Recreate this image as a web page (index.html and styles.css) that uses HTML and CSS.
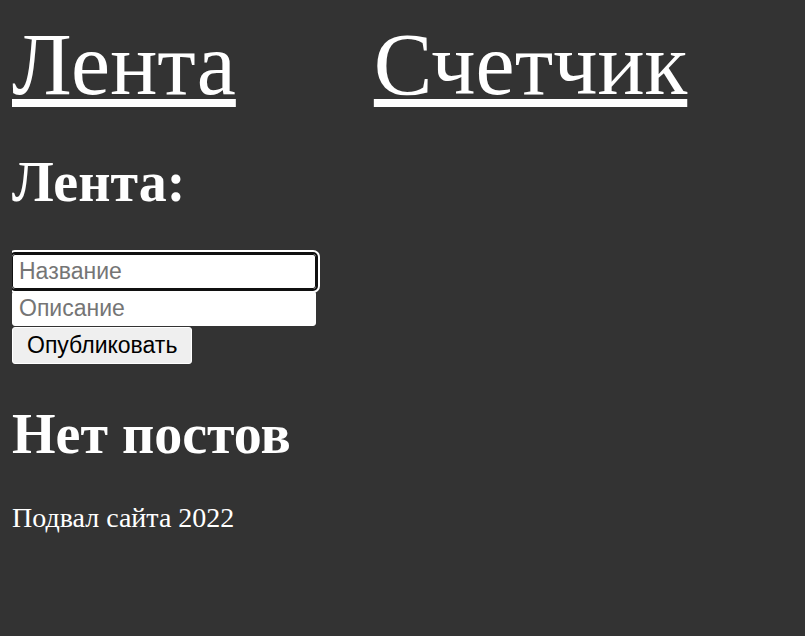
FILE: index.html
```html
<!DOCTYPE html>
<html lang="ru">
<head>
<meta charset="utf-8">
<title>Лента</title>
<link rel="stylesheet" href="styles.css">
</head>
<body>
<nav class="nav">
  <a class="nav-link" href="#">Лента</a>
  <a class="nav-link" href="#">Счетчик</a>
</nav>
<main>
  <h2 class="title">Лента:</h2>
  <form class="post-form">
    <input class="field field-focused" type="text" placeholder="Название">
    <input class="field" type="text" placeholder="Описание">
    <button class="btn" type="button">Опубликовать</button>
  </form>
  <h2 class="empty">Нет постов</h2>
</main>
<footer class="footer">Подвал сайта 2022</footer>
</body>
</html>
```
FILE: styles.css
```css
html, body {
  background: #333333;
}
body {
  margin: 12px;
  color: #ffffff;
  font-family: "Liberation Serif", "Times New Roman", serif;
  font-size: 28px;
}
.nav {
  display: flex;
  gap: 138px;
  padding-top: 2px;
  line-height: normal;
}
.nav-link {
  color: #ffffff;
  font-size: 88px;
  text-decoration: underline;
}
.title, .empty {
  font-size: 56px;
  font-weight: bold;
  line-height: normal;
}
.title {
  margin: 35px 0 36px;
}
.empty {
  margin: 38px 0 36px;
}
.post-form {
  display: flex;
  flex-direction: column;
  align-items: flex-start;
  gap: 2px;
}
.field {
  box-sizing: border-box;
  width: 304px;
  height: 35px;
  margin: 0;
  padding: 1px 6px;
  font-family: "Liberation Sans", Arial, sans-serif;
  font-size: 23px;
  color: #000;
  background: #ffffff;
  border: 1px solid #ffffff;
  border-radius: 3px;
}
.field::placeholder {
  color: #757575;
}
.field-focused {
  margin-top: 4px;
  border: 1px solid #101010;
  outline: 2px solid #101010;
  box-shadow: 0 0 0 4px #ffffff;
}
.btn {
  box-sizing: border-box;
  height: 37px;
  margin-top: -1px;
  padding: 1px 14px;
  font-family: "Liberation Sans", Arial, sans-serif;
  font-size: 23px;
  color: #000;
  background: #efefef;
  border: 1px solid #ffffff;
  border-radius: 3px;
}
.footer {
  margin: 0;
  line-height: normal;
}
```
